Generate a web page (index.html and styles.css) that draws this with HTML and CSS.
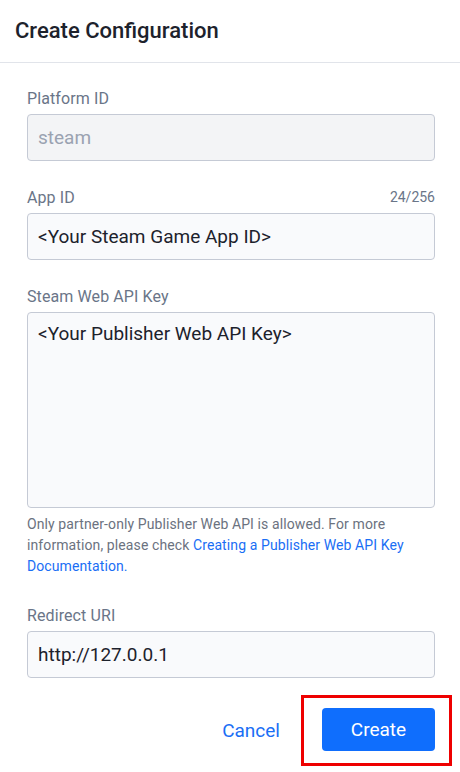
FILE: index.html
```html
<!DOCTYPE html>
<html lang="en">
<head>
<meta charset="utf-8">
<title>Create Configuration</title>
<link rel="stylesheet" href="styles.css">
</head>
<body>
<div class="dialog">
  <header class="dialog-header">
    <h1 class="dialog-title">Create Configuration</h1>
  </header>
  <form class="dialog-body">
    <div class="field">
      <div class="field-label-row"><label class="field-label">Platform ID</label></div>
      <div class="input input-disabled">steam</div>
    </div>
    <div class="field">
      <div class="field-label-row"><label class="field-label">App ID</label><span class="counter">24/256</span></div>
      <div class="input">&lt;Your Steam Game App ID&gt;</div>
    </div>
    <div class="field field-help">
      <div class="field-label-row"><label class="field-label">Steam Web API Key</label></div>
      <div class="input textarea">&lt;Your Publisher Web API Key&gt;</div>
      <p class="help">Only partner-only Publisher Web API is allowed. For more information, please check <a class="link" href="#">Creating a Publisher Web API Key Documentation.</a></p>
    </div>
    <div class="field field-last">
      <div class="field-label-row"><label class="field-label">Redirect URI</label></div>
      <div class="input">http://127.0.0.1</div>
    </div>
  </form>
  <footer class="dialog-footer">
    <button class="btn-cancel" type="button">Cancel</button>
    <div class="highlight">
      <button class="btn-primary" type="button">Create</button>
    </div>
  </footer>
</div>
</body>
</html>
```
FILE: styles.css
```css
* { box-sizing: border-box; }
html, body { margin: 0; padding: 0; background: #ffffff; }
body {
  font-family: Roboto, "Liberation Sans", Arial, sans-serif;
  color: #1f2430;
  width: 460px;
}
.dialog { width: 460px; }
.dialog-header {
  height: 63px;
  border-bottom: 1px solid #e1e4ea;
  display: flex;
  align-items: center;
  padding: 0 15px 2px;
}
.dialog-title {
  margin: 0;
  font-size: 22px;
  font-weight: 500;
  color: #1d222c;
}
.dialog-body {
  padding: 25px 25px 0 27px;
  display: flex;
  flex-direction: column;
}
.field { margin-bottom: 26px; }
.field-help { margin-bottom: 28px; }
.field-last { margin-bottom: 17px; }
.field-label-row {
  display: flex;
  justify-content: space-between;
  align-items: center;
  height: 20px;
  margin-bottom: 6px;
}
.field-label {
  font-size: 16px;
  color: #6a7588;
  letter-spacing: 0.1px;
}
.counter {
  font-size: 14px;
  color: #6a7588;
}
.input {
  height: 47px;
  border: 1px solid #c5cad5;
  border-radius: 4px;
  background: #f9fafc;
  padding: 0 9px 0 10px;
  display: flex;
  align-items: center;
  font-size: 19px;
  color: #1d222c;
}
.input-disabled {
  background: #f3f4f6;
  color: #9aa2b1;
}
.textarea {
  height: 196px;
  align-items: flex-start;
  padding-top: 9px;
  line-height: 24px;
}
.help {
  margin: 6px 0 0;
  font-size: 14px;
  line-height: 21px;
  color: #6b7280;
  letter-spacing: 0.1px;
}
.link {
  color: #1a6ef5;
  text-decoration: none;
}
.dialog-footer {
  display: flex;
  justify-content: flex-end;
  align-items: center;
  padding-right: 8px;
}
.btn-cancel {
  border: none;
  background: none;
  font-family: inherit;
  font-size: 19px;
  color: #1a6ef5;
  padding: 0;
  margin-right: 21px;
  cursor: pointer;
}
.highlight {
  border: 3px solid #ee0000;
  padding: 10px 14px 12px 18px;
}
.btn-primary {
  width: 113px;
  height: 43px;
  border: none;
  border-radius: 4px;
  background: #0f6efd;
  color: #ffffff;
  font-family: inherit;
  font-size: 19px;
  cursor: pointer;
}
```
